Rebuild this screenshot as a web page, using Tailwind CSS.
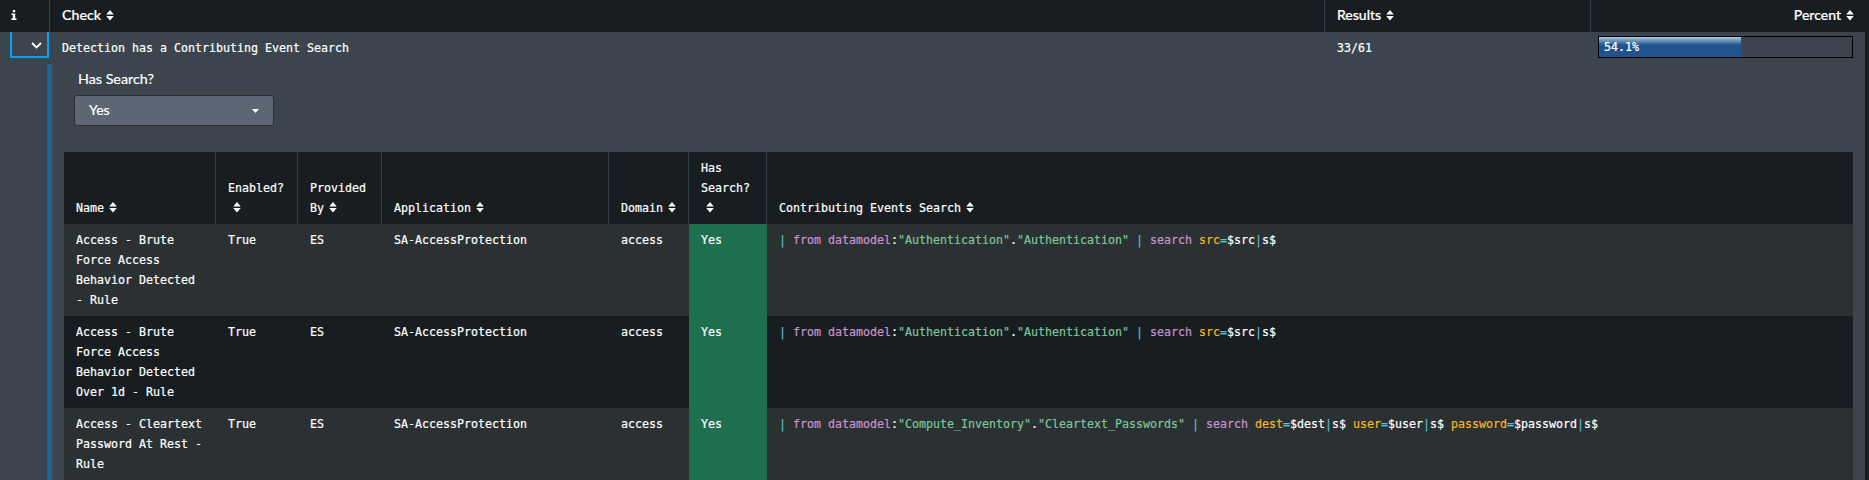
<!DOCTYPE html>
<html lang="en">
<head>
<meta charset="utf-8">
<title>Detection checks</title>
<script src="https://cdn.jsdelivr.net/npm/@tailwindcss/browser@4"></script>
</head>
<body class="h-[480px] w-[1869px] overflow-hidden bg-[#171d21] font-['Lato',sans-serif] text-sm leading-5 text-white [-webkit-text-stroke:0.2px]">
<svg class="hidden">
  <symbol id="sort" viewBox="0 0 8 11"><path fill="#fff" d="M4 0 7.800 4.600H.2zM4 10.600 .2 6h7.600z"/></symbol>
</svg>

<header class="flex h-8 pr-1 font-medium">
  <div class="flex w-[50px] items-center border-r border-[#3c444d] pb-px pl-[11px]">
    <svg class="h-[11px] w-[6px]" viewBox="0 0 6 11"><path fill="#fff" d="M1.800 0h2.400v2.200H1.800zM.5 3.600h3.700v5h1.300v1.500H.3V8.600h1.500V5H.5z"/></svg>
  </div>
  <div class="flex w-[1275px] items-center border-r border-[#31404b] pb-[2px] pl-3"><span class="w-[39px] text-[14.2px]">Check</span><svg class="ml-[5px] h-[11px] w-2"><use href="#sort"/></svg></div>
  <div class="flex w-[266px] items-center border-r border-[#31404b] pb-[2px] pl-3"><span class="text-[14px]">Results</span><svg class="ml-[5px] h-[11px] w-2"><use href="#sort"/></svg></div>
  <div class="flex flex-1 items-center justify-end pr-[11px] pb-[2px]"><span class="text-[14px]">Percent</span><svg class="ml-[5px] h-[11px] w-2"><use href="#sort"/></svg></div>
</header>

<main class="mr-1 h-[448px] bg-[#3c444d]">
  <div class="flex h-8 font-['DejaVu_Sans_Mono',monospace] text-[11.63px]">
    <div class="ml-[10px] flex h-[26px] w-[39px] items-center justify-end border-2 border-t-0 border-[#00a4fd] pr-[5px] pt-[2px]">
      <svg class="h-[7px] w-[11px]" viewBox="0 0 11 7" fill="none" stroke="#fff" stroke-width="1.800"><path d="M1 1l4.500 4.500L10 1"/></svg>
    </div>
    <div class="w-[1276px] pl-[13px] pt-[6px]">Detection has a Contributing Event Search</div>
    <div class="w-[273px] pl-3 pt-[6px]">33/61</div>
    <div class="mt-1 h-[22px] w-[255px] border border-black">
      <div class="h-5 w-[142px] bg-linear-to-b from-[#a9cfe0] via-[#23538c] via-40% to-[#23538c] pl-[5px] leading-5">54.1%</div>
    </div>
  </div>

  <div class="ml-[47px] h-[416px] border-l-5 border-[#1e6599] pl-3 pr-3">
    <div class="h-[88px] pl-[10px] pt-[5px]">
      <div class="pl-1 text-[14.300px] leading-5">Has Search?</div>
      <div class="mt-[6px] flex h-[31px] w-[200px] items-center justify-between rounded-[3px] border border-[#2b3033] bg-[#5c6773] pl-[14px] pr-[14px]">
        <span class="pb-px">Yes</span>
        <svg class="h-1 w-[7px]" viewBox="0 0 7 4"><path fill="#fff" d="M0 0h7L3.500 4z"/></svg>
      </div>
    </div>

    <table class="w-[1789px] table-fixed border-collapse font-['DejaVu_Sans_Mono',monospace] text-[11.63px] leading-5">
      <colgroup><col class="w-[152px]"><col class="w-[82px]"><col class="w-[84px]"><col class="w-[227px]"><col class="w-[80px]"><col class="w-[78px]"><col></colgroup>
      <thead>
        <tr class="h-[72px] bg-[#171d21] text-left align-bottom *:bg-right *:bg-no-repeat *:bg-size-[1px_100%] *:bg-linear-to-r *:from-[#31404b] *:to-[#31404b] *:py-[6px] *:pl-3 *:align-bottom *:font-normal *:last:bg-none">
          <th>Name<svg class="ml-[5px] inline h-[11px] w-2 align-[-1px]"><use href="#sort"/></svg></th>
          <th>Enabled?<br><svg class="ml-[5px] inline h-[11px] w-2 align-[-1px]"><use href="#sort"/></svg></th>
          <th>Provided<br>By<svg class="ml-[5px] inline h-[11px] w-2 align-[-1px]"><use href="#sort"/></svg></th>
          <th>Application<svg class="ml-[5px] inline h-[11px] w-2 align-[-1px]"><use href="#sort"/></svg></th>
          <th>Domain<svg class="ml-[5px] inline h-[11px] w-2 align-[-1px]"><use href="#sort"/></svg></th>
          <th>Has<br>Search?<br><svg class="ml-[5px] inline h-[11px] w-2 align-[-1px]"><use href="#sort"/></svg></th>
          <th>Contributing Events Search<svg class="ml-[5px] inline h-[11px] w-2 align-[-1px]"><use href="#sort"/></svg></th>
        </tr>
      </thead>
      <tbody>
        <tr class="bg-[#2b3033] *:py-[6px] *:pl-3 *:align-top">
          <td>Access - Brute<br>Force Access<br>Behavior Detected<br>- Rule</td><td>True</td><td>ES</td><td>SA-AccessProtection</td><td>access</td><td class="bg-[#1e6f50]">Yes</td>
          <td class="whitespace-pre"><span class="text-[#5cc0c4]">|</span> <span class="text-[#cb94cc]">from</span> <span class="text-[#cb94cc]">datamodel</span>:<span class="text-[#7ec699]">"Authentication"</span>.<span class="text-[#7ec699]">"Authentication"</span> <span class="text-[#5cc0c4]">|</span> <span class="text-[#cb94cc]">search</span> <span class="text-[#f2b827]">src</span><span class="text-[#5cc0c4]">=</span>$src<span class="text-[#5cc0c4]">|</span>s$</td>
        </tr>
        <tr class="bg-[#171d21] *:py-[6px] *:pl-3 *:align-top">
          <td>Access - Brute<br>Force Access<br>Behavior Detected<br>Over 1d - Rule</td><td>True</td><td>ES</td><td>SA-AccessProtection</td><td>access</td><td class="bg-[#1e6f50]">Yes</td>
          <td class="whitespace-pre"><span class="text-[#5cc0c4]">|</span> <span class="text-[#cb94cc]">from</span> <span class="text-[#cb94cc]">datamodel</span>:<span class="text-[#7ec699]">"Authentication"</span>.<span class="text-[#7ec699]">"Authentication"</span> <span class="text-[#5cc0c4]">|</span> <span class="text-[#cb94cc]">search</span> <span class="text-[#f2b827]">src</span><span class="text-[#5cc0c4]">=</span>$src<span class="text-[#5cc0c4]">|</span>s$</td>
        </tr>
        <tr class="bg-[#2b3033] *:py-[6px] *:pl-3 *:align-top">
          <td>Access - Cleartext<br>Password At Rest -<br>Rule</td><td>True</td><td>ES</td><td>SA-AccessProtection</td><td>access</td><td class="bg-[#1e6f50]">Yes</td>
          <td class="whitespace-pre"><span class="text-[#5cc0c4]">|</span> <span class="text-[#cb94cc]">from</span> <span class="text-[#cb94cc]">datamodel</span>:<span class="text-[#7ec699]">"Compute_Inventory"</span>.<span class="text-[#7ec699]">"Cleartext_Passwords"</span> <span class="text-[#5cc0c4]">|</span> <span class="text-[#cb94cc]">search</span> <span class="text-[#f2b827]">dest</span><span class="text-[#5cc0c4]">=</span>$dest<span class="text-[#5cc0c4]">|</span>s$ <span class="text-[#f2b827]">user</span><span class="text-[#5cc0c4]">=</span>$user<span class="text-[#5cc0c4]">|</span>s$ <span class="text-[#f2b827]">password</span><span class="text-[#5cc0c4]">=</span>$password<span class="text-[#5cc0c4]">|</span>s$</td>
        </tr>
      </tbody>
    </table>
  </div>
</main>
</body>
</html>
